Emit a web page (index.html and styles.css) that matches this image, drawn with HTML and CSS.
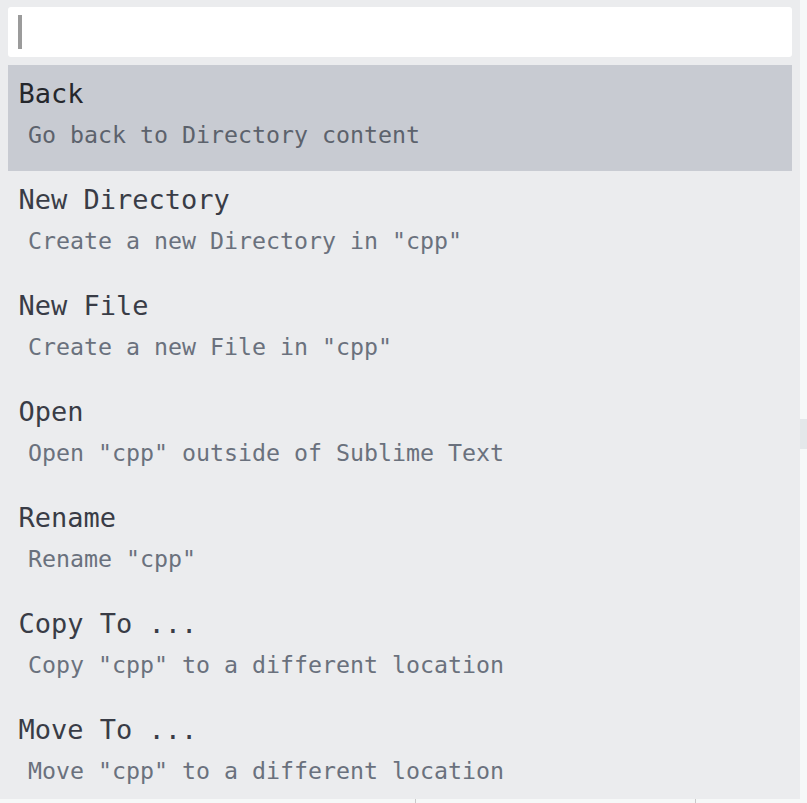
FILE: index.html
```html
<!DOCTYPE html>
<html>
<head>
<meta charset="utf-8">
<link rel="stylesheet" href="styles.css">
</head>
<body>
<div class="window">
  <div class="palette">
    <div class="input"><span class="caret"></span></div>
    <ul class="items">
      <li class="item selected">
        <div class="title">Back</div>
        <div class="desc">Go back to Directory content</div>
      </li>
      <li class="item">
        <div class="title">New Directory</div>
        <div class="desc">Create a new Directory in "cpp"</div>
      </li>
      <li class="item">
        <div class="title">New File</div>
        <div class="desc">Create a new File in "cpp"</div>
      </li>
      <li class="item">
        <div class="title">Open</div>
        <div class="desc">Open "cpp" outside of Sublime Text</div>
      </li>
      <li class="item">
        <div class="title">Rename</div>
        <div class="desc">Rename "cpp"</div>
      </li>
      <li class="item">
        <div class="title">Copy To ...</div>
        <div class="desc">Copy "cpp" to a different location</div>
      </li>
      <li class="item">
        <div class="title">Move To ...</div>
        <div class="desc">Move "cpp" to a different location</div>
      </li>
    </ul>
  </div>
  <div class="scroll-mark"></div>
  <div class="ruler ruler-a"></div>
  <div class="ruler ruler-b"></div>
</div>
</body>
</html>
```
FILE: styles.css
```css
html, body {
  margin: 0;
  padding: 0;
  background: #f6f8f8;
}

.window {
  position: relative;
  width: 807px;
  height: 803px;
  overflow: hidden;
}

.palette {
  width: 800px;
  height: 799px;
  box-sizing: border-box;
  padding: 7px 8px 0 8px;
  background: #ebecee;
  overflow: hidden;
  font-family: "DejaVu Sans Mono", "Liberation Mono", monospace;
}

.input {
  height: 50px;
  background: #ffffff;
  border-radius: 3px;
  display: flex;
  align-items: center;
  padding-left: 10px;
  margin-bottom: 8px;
}

.caret {
  display: block;
  width: 4px;
  height: 34px;
  background: #9b9b9b;
}

.items {
  list-style: none;
  margin: 0;
  padding: 0;
}

.item {
  height: 106px;
  box-sizing: border-box;
  padding: 12px 0 0 10.5px;
}

.item.selected {
  background: #c8cbd2;
}

.title {
  font-size: 27px;
  line-height: 33px;
  color: #393c46;
  white-space: pre;
}

.selected .title {
  color: #25272c;
}

.desc {
  margin: 11px 0 0 9.5px;
  font-size: 23.25px;
  line-height: 28px;
  color: #6a717d;
  white-space: pre;
}

.selected .desc {
  color: #5c626c;
}

.scroll-mark {
  position: absolute;
  left: 800px;
  top: 419px;
  width: 7px;
  height: 30px;
  background: #e4e7ea;
}

.ruler {
  position: absolute;
  top: 799px;
  width: 1px;
  height: 4px;
  background: #c9c9c9;
}

.ruler-a { left: 415px; }
.ruler-b { left: 695px; }
```
